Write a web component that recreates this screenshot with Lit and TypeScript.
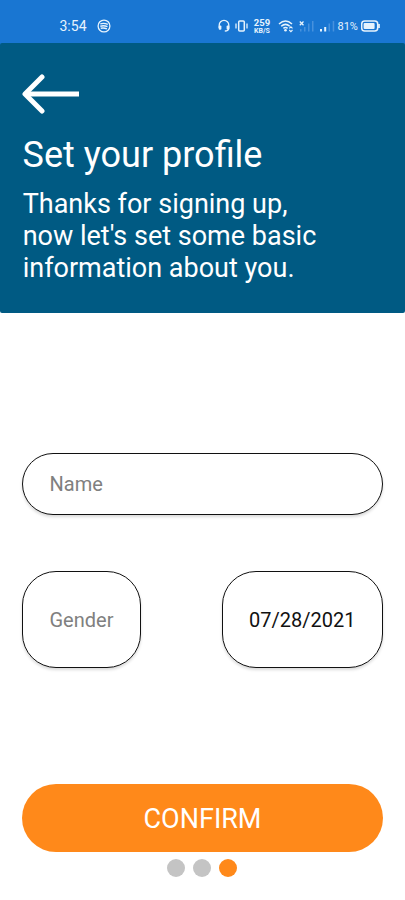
import { LitElement, html, css, svg } from "lit";
import { customElement } from "lit/decorators.js";

@customElement("status-bar")
class StatusBar extends LitElement {
  static styles = css`
    :host { display: flex; align-items: center; justify-content: space-between; height: 43px; box-sizing: border-box; padding: 9px 25px 0 59.5px; background: #1976d2; color: #e6f3fd; }
    svg { display: block; flex: none; fill: none; stroke: #e6f3fd; }
    .left, .right { display: flex; align-items: center; }
    .time { font-size: 14px; line-height: 16px; width: 37px; }
    .rate { display: flex; flex-direction: column; align-items: center; width: 17px; margin: 1px 7px 0 6px; font-weight: 700; }
    .num { font-size: 9.5px; line-height: 9px; height: 8px; margin-top: -1px; }
    .unit { font-size: 7px; line-height: 8px; margin-top: 1px; margin-bottom: -1px; }
    .pct { font-size: 11px; line-height: 14px; width: 23px; padding-top: 1px; margin-right: 0.5px; white-space: nowrap; }
    .sig1 { margin-left: 5px; }
    .sig2 { margin: 0 3px 0 5px; }
    .vib { margin-left: 5px; }
    .solid { fill: #e6f3fd; stroke: none; }
    .dim { fill: #4791dd; stroke: none; }
  `;
  render() {
    return html`
      <div class="left">
        <span class="time">3:54</span>
        <svg width="14" height="14" viewBox="0 0 14 14"><circle cx="7" cy="7" r="5.9" stroke-width="1.3"/><path d="M3.3 4.9q3.7-1.2 7.5.5M3.3 7.2q3.7-1 7.2.5M3.7 9.3q3-.8 6.2.5" stroke-width="1.4"/></svg>
      </div>
      <div class="right">
        <svg width="12" height="14" viewBox="0 0 12 14"><path d="M1.2 9V6.2a4.8 4.8 0 0 1 9.6 0V9q0 3-4 3" stroke-width="1.3"/><rect class="solid" x=".7" y="6.5" width="2.7" height="4.3" rx="1"/><rect class="solid" x="8.6" y="6.5" width="2.7" height="4.3" rx="1"/></svg>
        <svg class="vib" width="13" height="14" viewBox="0 0 13 14"><rect x="3.7" y="2" width="5.6" height="10" rx="1" stroke-width="1.5"/><path d="M1 4.5v5M12 4.5v5" stroke-width="1.3"/></svg>
        <div class="rate"><span class="num">259</span><span class="unit">KB/S</span></div>
        <svg width="16" height="14" viewBox="0 0 16 14"><path d="M1 5Q7.5-1 14 5M3.2 7.3q4.3-3.9 8.6 0M5.4 9.4q2.1-1.8 4.2 0" stroke-width="1.5"/><circle class="solid" cx="7.5" cy="11.2" r="1.3"/><path d="m11.3 9.4 1.6-1.6 1.6 1.6M11.3 11l1.6 1.6 1.6-1.6" stroke-width="1.1"/></svg>
        <svg class="sig1" width="16" height="14" viewBox="0 0 16 14"><path d="m.8 2.5 3.7 3.7M4.5 2.5.8 6.2" stroke-width="1.3"/>${svg`<g class="dim"><rect x="1" y="10" width="1.5" height="2.5"/><rect x="5" y="8" width="1.5" height="4.5"/><rect x="9" y="4.5" width="1.5" height="8"/><rect x="13" y="2" width="1.5" height="10.5"/></g>`}</svg>
        <svg class="sig2" width="15" height="14" viewBox="0 0 15 14">${svg`<rect class="solid" x="0" y="10" width="2" height="2.5"/><rect class="solid" x="4.2" y="8" width="2" height="4.5"/><rect class="dim" x="8.5" y="4.5" width="1.5" height="8"/><rect class="dim" x="12.7" y="2" width="1.5" height="10.5"/>`}</svg>
        <span class="pct">81%</span>
        <svg width="19" height="12" viewBox="0 0 19 12"><rect x=".7" y="1.1" width="16" height="9.8" rx="3" stroke-width="1.5"/><rect class="solid" x="2.6" y="2.9" width="11" height="6.2" rx="1"/><path d="M18 4v4" stroke-width="1.7"/></svg>
      </div>`;
  }
}

@customElement("app-root")
class AppRoot extends LitElement {
  static styles = css`
    :host { display: flex; flex-direction: column; height: 900px; background: #fff; font-family: Roboto, sans-serif; overflow: hidden; }
    .top { background: linear-gradient(#1976d2 60px, #fff 60px); }
    header { box-sizing: border-box; height: 270px; padding: 31px 22px 0; background: #005a83; color: #fff; border-radius: 2px; }
    .back { display: block; }
    h1 { margin: 20px 0 0 0.6px; font-size: 36px; line-height: 42px; font-weight: 400; white-space: nowrap; }
    .intro { margin: 12px 0 0 0.7px; font-size: 27px; line-height: 32px; white-space: nowrap; }
    main { display: flex; flex-direction: column; flex: 1; padding: 139px 22px 0; }
    .field { box-sizing: border-box; display: flex; align-items: center; border-radius: 34px; background: #fff; font-size: 20px; line-height: 24px; color: #808080; border: 1px solid #111; box-shadow: 0 2px 3px rgba(0,0,0,.15); }
    .name { height: 62px; margin-top: 1px; padding-left: 26.5px; }
    .row { display: flex; justify-content: space-between; margin-top: 56px; }
    .gender { width: 119px; height: 97px; padding-left: 26.5px; }
    .date { width: 161px; height: 97px; color: #111; padding-left: 26px; }
    .confirm { margin: 116px 0 0; height: 68px; border: 0; border-radius: 34px; background: #ff891a; color: #fff; font: 400 27px/32px Roboto, sans-serif; padding: 2px 0 0; }
    .dots { display: flex; justify-content: center; gap: 8px; margin-top: 7px; padding-right: 1px; }
    .dot { width: 18px; height: 18px; border-radius: 50%; background: #c4c4c4; }
    .active { background: #ff891a; }
  `;
  render() {
    return html`
      <div class="top">
        <status-bar></status-bar>
        <header>
          <svg class="back" width="58" height="40" viewBox="0 0 58 40" fill="none" stroke="#fff"><path d="M3 20h54" stroke-width="5"/><path d="M20 3 3 20l17 17" stroke-width="5" stroke-linecap="round" stroke-linejoin="round"/></svg>
          <h1>Set your profile</h1>
          <p class="intro">Thanks for signing up,<br>now let's set some basic<br>information about you.</p>
        </header>
      </div>
      <main>
        <div class="field name">Name</div>
        <div class="row">
          <div class="field gender">Gender</div>
          <div class="field date">07/28/2021</div>
        </div>
        <button class="confirm">CONFIRM</button>
        <div class="dots">${[false, false, true].map((on) => html`<span class="dot ${on ? "active" : ""}"></span>`)}</div>
      </main>`;
  }
}
